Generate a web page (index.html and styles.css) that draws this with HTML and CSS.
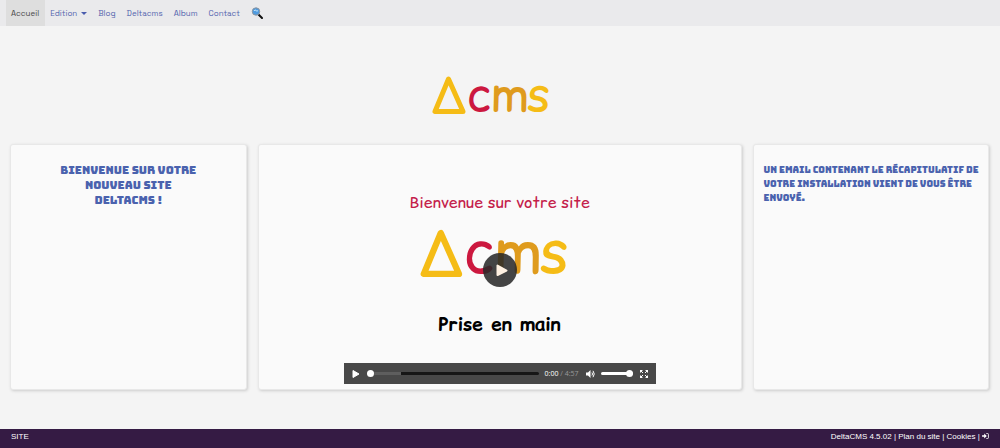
FILE: index.html
```html
<!DOCTYPE html>
<html lang="fr">
<head>
    <meta charset="UTF-8">
    <meta name="viewport" content="width=device-width, initial-scale=1.0">
    <title>Accueil - DeltaCMS</title>
    <link rel="stylesheet" href="styles.css">
</head>
<body>
    <nav class="menu">
        <a class="active" href="#">Accueil</a>
        <a href="#">Edition <span class="caret"></span></a>
        <a href="#">Blog</a>
        <a href="#">Deltacms</a>
        <a href="#">Album</a>
        <a href="#">Contact</a>
        <a class="search" href="#" aria-label="Rechercher">
            <svg viewBox="0 0 12 12" width="12" height="12">
                <path d="M7.500 7.500L11 11" stroke="#111" stroke-width="2" stroke-linecap="round"/>
                <circle cx="5" cy="4.500" r="3.700" fill="#4f9be0" stroke="#8a949e"/>
                <path d="M3 4Q4 2 5 3.500Q6 5 7 3.500" fill="none" stroke="#c4e4fa"/>
            </svg>
        </a>
    </nav>

    <header class="banner">
        <svg class="logo" viewBox="0 0 116 40" role="img" aria-label="Delta cms">
            <path d="M16.500 4L3 36.500H31Z" fill="none" stroke="#f5bc16" stroke-width="5" stroke-linejoin="round"/>
            <text y="36"><tspan class="c" x="35">c</tspan><tspan class="m" x="59">m</tspan><tspan class="s" x="95">s</tspan></text>
        </svg>
    </header>

    <main class="row">
        <section class="block">
            <h2 class="welcome">Bienvenue sur votre nouveau site DeltaCMS !</h2>
        </section>

        <section class="block video-block">
            <div class="player">
                <div class="poster">
                    <p class="poster-title">Bienvenue sur votre site</p>
                    <svg class="logo" viewBox="0 0 116 40" role="img" aria-label="Delta cms">
                        <path d="M16.500 4L3 36.500H31Z" fill="none" stroke="#f5bc16" stroke-width="5" stroke-linejoin="round"/>
                        <text y="36"><tspan class="c" x="35">c</tspan><tspan class="m" x="59">m</tspan><tspan class="s" x="95">s</tspan></text>
                    </svg>
                    <p class="poster-subtitle">Prise en main</p>
                </div>
                <button class="big-play" aria-label="Lire la vidéo">
                    <svg viewBox="0 0 34 34" width="34" height="34">
                        <path d="M14.500 12.500V22L23.500 17.500Z" fill="#fff1e2" stroke="#fff1e2" stroke-width="2" stroke-linejoin="round"/>
                    </svg>
                </button>
                <div class="controls">
                    <button aria-label="Lecture">
                        <svg viewBox="0 0 10 10" width="10" height="10"><path d="M2 1.500V8.500L8 5Z" fill="#fff" stroke="#fff" stroke-linejoin="round"/></svg>
                    </button>
                    <input class="seek" type="range" value="0" aria-label="Progression">
                    <span class="time">0:00 <span>/ 4:57</span></span>
                    <button aria-label="Muet">
                        <svg viewBox="0 0 10 10" width="10" height="10">
                            <path d="M1 3.500H3L5.500 1V9L3 6.500H1Z" fill="#fff"/>
                            <path d="M7 3.500Q8 5 7 6.500M8 1.800Q10.500 5 8 8.200" fill="none" stroke="#fff"/>
                        </svg>
                    </button>
                    <input class="volume" type="range" value="100" aria-label="Volume">
                    <button aria-label="Plein écran">
                        <svg viewBox="0 0 10 10" width="10" height="10">
                            <path d="M1 1H4L1 4ZM9 1V4L6 1ZM1 9V6L4 9ZM9 9H6L9 6Z" fill="#fff"/>
                            <path d="M2 2L4 4M8 2L6 4M2 8L4 6M8 8L6 6" stroke="#fff"/>
                        </svg>
                    </button>
                </div>
            </div>
        </section>

        <section class="block notice-block">
            <h3 class="notice">Un email contenant le récapitulatif de votre installation vient de vous être envoyé.</h3>
        </section>
    </main>

    <footer class="footer">
        <span>SITE</span>
        <div>
            <a href="#">DeltaCMS 4.5.02</a> | <a href="#">Plan du site</a> | <a href="#">Cookies</a> |
            <a href="#" aria-label="Connexion">
                <svg viewBox="0 0 8 7" width="7" height="6">
                    <path d="M0 2.500H2.500V0.500L5.500 3.500L2.500 6.500V4.500H0Z" fill="#fff"/>
                    <path d="M5 0.600H6.500Q7.400 0.600 7.400 1.500V5.500Q7.400 6.400 6.500 6.400H5" fill="none" stroke="#fff"/>
                </svg>
            </a>
        </div>
    </footer>
</body>
</html>
```
FILE: styles.css
```css
* {
    margin: 0;
    padding: 0;
    box-sizing: border-box;
}

body {
    display: flex;
    flex-direction: column;
    min-height: 100vh;
    font-family: Inter, 'Liberation Sans', sans-serif;
    font-size: 8px;
    background: #f4f4f4;
}

a {
    color: inherit;
    text-decoration: none;
}

button {
    display: flex;
    border: none;
    background: none;
    cursor: pointer;
}

/* Menu */
.menu {
    display: flex;
    height: 26px;
    padding: 0 6px;
    background: #eaeaec;
    color: #5465ae;
    font-family: 'Space Grotesk', Inter, sans-serif;
}

.menu a {
    display: flex;
    align-items: center;
    padding: 0 6px 0 5px;
}

.menu .active {
    background: #dedede;
    color: #494949;
}

.caret {
    margin: 0 0 0 4px;
    border: 3px solid transparent;
    border-top-color: #4a5cad;
    border-bottom: none;
}

/* Logo */
.banner {
    display: flex;
    justify-content: center;
    padding: 49px 20px 29px 0;
}

.logo {
    display: block;
    width: 116px;
    overflow: visible;
}

.logo text {
    font-family: 'Comic Relief', 'Comic Neue', 'Liberation Sans', sans-serif;
    font-size: 48px;
}

.logo .c {
    fill: #cc183f;
}

.logo .m {
    fill: #df9b1d;
}

.logo .s {
    fill: #f5bc16;
}

/* Blocks */
.row {
    display: grid;
    grid-template-columns: 1fr 2fr 1fr;
    padding: 0 5px;
}

.block {
    margin: 0 6px 0 5px;
    padding: 18px 10px;
    background: #fafafa;
    border: 1px solid #e8e8e8;
    border-radius: 3px;
    box-shadow: 1px 1px 3px #ccc;
}

.welcome,
.notice {
    font-family: Bungee, Inter, sans-serif;
    font-weight: normal;
    color: #4a62ae;
    text-transform: uppercase;
}

.welcome {
    max-width: 140px;
    margin: 0 auto;
    font-size: 11px;
    line-height: 15px;
    text-align: center;
}

.notice-block {
    padding-right: 2px;
}

.notice {
    font-size: 9px;
    line-height: 14px;
}

/* Video player */
.video-block {
    padding: 10px 10px 5px;
}

.player {
    position: relative;
    max-width: 312px;
    margin: 0 auto;
}

.poster {
    display: flex;
    flex-direction: column;
    align-items: center;
    padding: 35px 0 25px;
    font-family: 'Comic Relief', 'Comic Neue', 'Open Sans', sans-serif;
    text-align: center;
}

.poster .logo {
    width: 146px;
    margin: 14px 14px 32px 0;
}

.poster-title {
    font-size: 16px;
    line-height: 24px;
    color: #c4204a;
}

.poster-subtitle {
    font-size: 19px;
    font-weight: bold;
    line-height: 28px;
    color: #000;
}

/* Lies over the middle of the poster */
.big-play {
    position: absolute;
    top: 50%;
    left: 50%;
    transform: translate(-50%, -50%);
    border-radius: 50%;
    background: rgba(40, 40, 40, 0.87);
}

.controls {
    display: flex;
    align-items: center;
    gap: 6px;
    height: 21px;
    padding: 0 7px;
    background: #484848;
}

.controls input {
    appearance: none;
    height: 3px;
    border-radius: 2px;
    background: #fff;
}

.controls input::-webkit-slider-thumb {
    appearance: none;
    width: 7px;
    height: 7px;
    border-radius: 50%;
    background: #fff;
}

.controls .seek {
    flex: 1;
    min-width: 0;
    background: linear-gradient(to right, #5e5e5e 20%, #161616 20%);
}

.controls .volume {
    width: 32px;
}

.time {
    font-family: 'Open Sans', sans-serif;
    font-size: 7px;
    color: #fff;
}

.time span {
    color: #999;
}

/* Footer */
.footer {
    display: flex;
    justify-content: space-between;
    height: 19px;
    margin-top: auto;
    padding: 2px 11px;
    background: #351b44;
    color: #fff;
    font-family: 'Liberation Sans', Arial, sans-serif;
    font-size: 8px;
    line-height: 12px;
}
```
